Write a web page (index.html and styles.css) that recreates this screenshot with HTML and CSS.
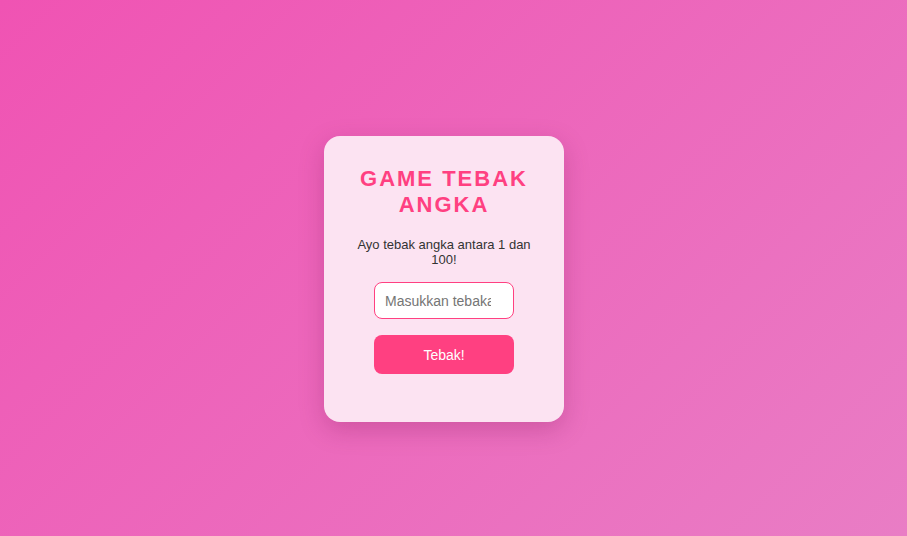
FILE: index.html
```html
<!DOCTYPE html>
<html lang="id">
<head>
<meta charset="utf-8">
<title>Game Tebak Angka</title>
<link rel="stylesheet" href="styles.css">
</head>
<body>
<div class="card">
  <h1 class="title">GAME TEBAK ANGKA</h1>
  <p class="intro">Ayo tebak angka antara 1 dan 100!</p>
  <input class="guess" type="number" placeholder="Masukkan tebakan">
  <button class="btn">Tebak!</button>
  <p class="result"></p>
</div>
</body>
</html>
```
FILE: styles.css
```css
html, body {
  margin: 0;
  padding: 0;
}
body {
  box-sizing: border-box;
  height: 100vh;
  padding: 22px 19px 0 0;
  background: linear-gradient(135deg, #f053b3 0%, #e97dc5 100%);
  font-family: "Liberation Sans", Arial, sans-serif;
  display: flex;
  align-items: center;
  justify-content: center;
}
.card {
  box-sizing: border-box;
  width: 240px;
  padding: 30px 30px 30px;
  background: #fce3f2;
  border-radius: 16px;
  box-shadow: 0 8px 24px rgba(120, 20, 80, 0.25);
  display: flex;
  flex-direction: column;
  align-items: center;
  text-align: center;
}
.title {
  margin: 0 0 19px;
  font-size: 22px;
  font-weight: bold;
  letter-spacing: 2px;
  color: #ff4081;
}
.intro {
  margin: 0 0 15px;
  font-size: 13px;
  color: #333;
}
.guess {
  box-sizing: border-box;
  width: 140px;
  height: 37px;
  padding: 0 7px 0 10px;
  border: 1px solid #ff4081;
  border-radius: 8px;
  background: #fff;
  font-family: "Liberation Sans", Arial, sans-serif;
  font-size: 14px;
  color: #333;
  outline: none;
}
.btn {
  box-sizing: border-box;
  width: 140px;
  height: 39px;
  margin-top: 16px;
  border: none;
  border-radius: 8px;
  background: #ff4081;
  color: #fff;
  font-family: "Liberation Sans", Arial, sans-serif;
  font-size: 14px;
  cursor: pointer;
}
.result {
  margin: 18px 0 0;
  min-height: 0;
}
```
